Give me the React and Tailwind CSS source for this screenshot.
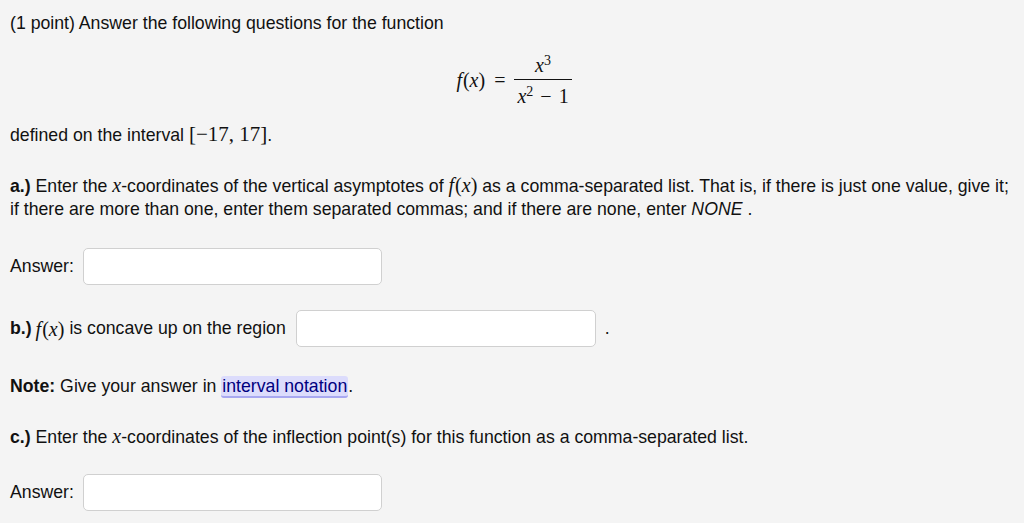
export default function App() {
  const serif = "font-['Liberation_Serif',serif]";
  return (
    <div className="min-h-[523px] w-[1024px] bg-[#f4f4f4] pl-[10px] pr-[8px] pt-[12px] font-['Liberation_Sans',Arial,sans-serif] text-[17.7px] leading-[23px] text-[#111]">
      <p>(1 point) Answer the following questions for the function</p>

      {/* Formula */}
      <div className={`mt-[17px] flex h-[56px] items-center justify-center pl-[2px] ${serif} text-[20px]`}>
        <i className="mr-[1px]">f</i>
        <span>(</span>
        <i>x</i>
        <span>)</span>
        <span className="mx-[9px]">=</span>
        <span className="inline-flex flex-col items-center leading-[26px]">
          <span className="px-[4px] pb-[1px]">
            <i>x</i>
            <sup className="text-[14px]">3</sup>
          </span>
          <span className="border-t border-[#111] px-[3px] pt-[3px]">
            <i>x</i>
            <sup className="text-[14px]">2</sup>
            <span className="mx-[7px]">−</span>1
          </span>
        </span>
      </div>

      <p className="mt-[16px]">
        defined on the interval <span className={`${serif} text-[21px] leading-none`}>[−17, 17]</span>.
      </p>

      <p className="mt-[28px]">
        <b>a.)</b> Enter the <i className={`${serif} text-[20px] leading-none`}>x</i>-coordinates of the vertical asymptotes of{' '}
        <span className={`${serif} text-[20px] leading-none`}>
          <i className="mr-[1px]">f</i>(<i>x</i>)
        </span>{' '}
        as a comma-separated list. That is, if there is just one value, give it; if there are more than one, enter them separated commas; and if there are none, enter <i>NONE</i> .
      </p>

      <div className="mt-[27px] flex items-center gap-[9px]">
        <span>Answer:</span>
        <input className="h-[37px] w-[299px] rounded-[5px] border border-[#d0d0d0] bg-white" />
      </div>

      <div className="mt-[25px] flex items-center">
        <b>b.)</b>
        <span className={`ml-[4px] ${serif} text-[20px] leading-none`}>
          <i className="mr-[1px]">f</i>(<i>x</i>)
        </span>
        <span className="ml-[5px]">is concave up on the region</span>
        <input className="ml-[10px] h-[37px] w-[300px] rounded-[5px] border border-[#d0d0d0] bg-white" />
        <span className="ml-[9px]">.</span>
      </div>

      <p className="mt-[28px]">
        <b>Note:</b> Give your answer in{' '}
        <span className="rounded-[3px] border-b-2 border-[#a8a8f0] bg-[#dcdcfc] px-[1px] text-[#000080]">interval notation</span>.
      </p>

      <p className="mt-[28px]">
        <b>c.)</b> Enter the <i className={`${serif} text-[20px] leading-none`}>x</i>-coordinates of the inflection point(s) for this function as a comma-separated list.
      </p>

      <div className="mt-[25px] flex items-center gap-[9px]">
        <span>Answer:</span>
        <input className="h-[37px] w-[299px] rounded-[5px] border border-[#d0d0d0] bg-white" />
      </div>
    </div>
  );
}
